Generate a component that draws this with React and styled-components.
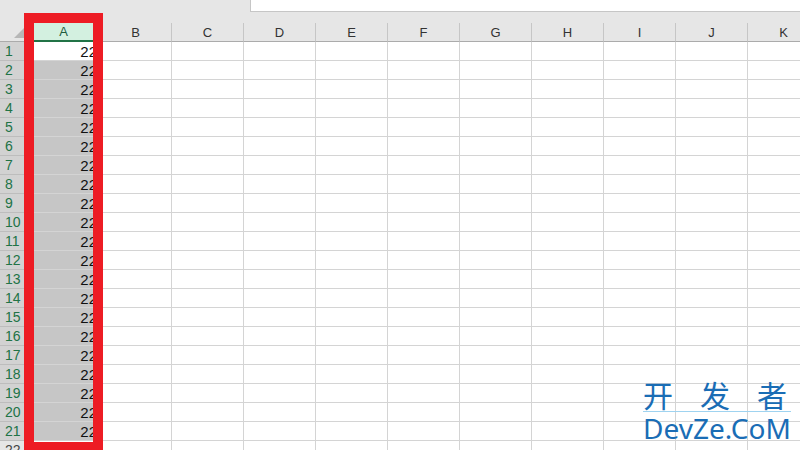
import React from "react";
import styled, { createGlobalStyle } from "styled-components";

const GlobalStyle = createGlobalStyle`
  html, body {
    margin: 0;
    padding: 0;
    background: #e6e6e6;
    overflow: hidden;
  }
`;

const COLS = ["A", "B", "C", "D", "E", "F", "G", "H", "I", "J", "K"];
const ROWS = Array.from({ length: 22 }, (_, i) => i + 1);

// 전체 화면
const Page = styled.div`
  position: relative;
  width: 800px;
  height: 450px;
  overflow: hidden;
  background: #e6e6e6;
  font-family: "Liberation Sans", Arial, sans-serif;
`;

// 상단 입력줄
const TopStrip = styled.div`
  display: flex;
  height: 12px;
  margin-bottom: 11px;
`;

const FormulaBox = styled.div`
  margin-left: 250px;
  flex: 1;
  background: #fff;
  border-left: 1px solid #c6c6c6;
  border-bottom: 1px solid #c6c6c6;
`;

// 시트 그리드
const Grid = styled.div`
  display: grid;
  grid-template-columns: 28px repeat(11, 72px);
  grid-auto-rows: 19px;
  background: #fff;
`;

const Corner = styled.div`
  position: relative;
  background: #e6e6e6;
  border-bottom: 1px solid #ababab;
  border-right: 1px solid #c6c6c6;
  &::after {
    content: "";
    position: absolute;
    right: 3px;
    bottom: 3px;
    border-style: solid;
    border-width: 0 0 10px 10px;
    border-color: transparent transparent #b7b7b7 transparent;
  }
`;

const ColHead = styled.div`
  display: flex;
  align-items: center;
  justify-content: center;
  font-size: 13px;
  color: ${(p) => (p.$selected ? "#1f5c3f" : "#333")};
  background: ${(p) => (p.$selected ? "#d3f0e0" : "#e6e6e6")};
  border-right: 1px solid #c6c6c6;
  border-bottom: ${(p) => (p.$selected ? "2px solid #217346" : "1px solid #ababab")};
  box-sizing: border-box;
`;

const RowHead = styled.div`
  display: flex;
  align-items: center;
  padding-left: 5px;
  font-size: 14px;
  color: ${(p) => (p.$selected ? "#217346" : "#444")};
  background: ${(p) => (p.$selected ? "#d2d2d2" : "#e6e6e6")};
  border-bottom: 1px solid #bdbdbd;
  border-right: 1px solid #ababab;
  box-sizing: border-box;
`;

const Cell = styled.div`
  display: flex;
  align-items: center;
  justify-content: flex-end;
  padding-right: 2px;
  font-size: 15px;
  color: #111;
  background: ${(p) => (p.$shade ? "#c6c6c6" : "#fff")};
  border-right: 1px solid #d4d4d4;
  border-bottom: 1px solid #d4d4d4;
  box-sizing: border-box;
  overflow: hidden;
`;

// 빨간 강조 테두리
const Highlight = styled.div`
  position: absolute;
  left: 24px;
  top: 13px;
  width: 79px;
  height: 439px;
  border: 10px solid #ed1c24;
  box-sizing: border-box;
  pointer-events: none;
`;

// 워터마크
const Watermark = styled.div`
  position: absolute;
  right: 9px;
  bottom: 8px;
  width: 148px;
  display: flex;
  flex-direction: column;
  align-items: stretch;
  gap: 2px;
  color: #1a6db5;
  font-family: "Noto Sans CJK SC", "Noto Sans", sans-serif;
`;

const MarkTop = styled.div`
  display: flex;
  justify-content: space-between;
  align-items: flex-end;
  height: 34px;
  font-size: 30px;
  line-height: 30px;
  padding: 0 4px 2px 0;
  border-bottom: 1px solid #9fd3f0;
`;

const MarkBottom = styled.div`
  font-family: "Noto Sans", sans-serif;
  font-size: 28px;
  line-height: 28px;
`;

export default function App() {
  return (
    <Page>
      <GlobalStyle />
      <TopStrip>
        <FormulaBox />
      </TopStrip>
      <Grid>
        <Corner />
        {COLS.map((c) => (
          <ColHead key={c} $selected={c === "A"}>
            {c}
          </ColHead>
        ))}
        {ROWS.map((r) => (
          <React.Fragment key={r}>
            <RowHead $selected={r <= 21}>{r}</RowHead>
            {COLS.map((c) => (
              <Cell key={c} $shade={c === "A" && r > 1 && r <= 21}>
                {c === "A" && r <= 21 ? "22" : ""}
              </Cell>
            ))}
          </React.Fragment>
        ))}
      </Grid>
      <Highlight />
      <Watermark>
        <MarkTop>
          <span>开</span>
          <span>发</span>
          <span>者</span>
        </MarkTop>
        <MarkBottom>DevZe.CoM</MarkBottom>
      </Watermark>
    </Page>
  );
}
